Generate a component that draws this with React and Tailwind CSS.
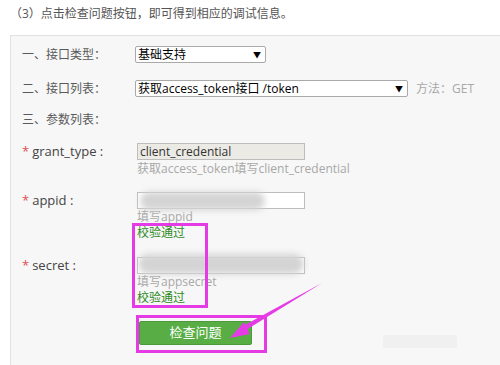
import React from "react";

const cjk = { fontFamily: '"Open Sans", "Noto Sans CJK SC", sans-serif' };

function Select({ w, children }) {
  return (
    <div
      className={`${w} h-[17px] bg-white border border-[#a9a9a9] rounded-[2px] flex items-center justify-between pl-[2px] pr-[4px] text-[12px] text-black`}
      style={cjk}
    >
      <span className="leading-none">{children}</span>
      <span className="text-[8px] leading-none">▼</span>
    </div>
  );
}

function Blur({ className }) {
  return <div className={`absolute bg-[#d4d4d4] blur-[3px] rounded-full ${className}`} />;
}

export default function App() {
  return (
    <div className="relative w-[500px] h-[365px] bg-white overflow-hidden" style={cjk}>
      <div className="pl-[10px] pt-[6px] h-[35px] text-[12px] text-[#555] leading-[16px]">
        （3）点击检查问题按钮，即可得到相应的调试信息。
      </div>
      <div className="ml-[10px] h-[340px] bg-[#f7f7f7] border-l border-t border-[#e2e2e2] pl-[11px] pt-[10px]">
        <div className="flex items-center h-[17px]">
          <div className="w-[113px] text-[12px] text-[#5a5a5a]">一、接口类型：</div>
          <Select w="w-[131px]">基础支持</Select>
        </div>
        <div className="flex items-center h-[17px] mt-[17px]">
          <div className="w-[113px] text-[12px] text-[#5a5a5a]">二、接口列表：</div>
          <Select w="w-[273px]">获取access_token接口 /token</Select>
          <div className="ml-[8px] text-[12px] text-[#a8a8a8]">方法：GET</div>
        </div>
        <div className="flex items-center h-[17px] mt-[14px]">
          <div className="w-[113px] text-[12px] text-[#5a5a5a]">三、参数列表：</div>
        </div>

        <div className="flex mt-[15px]">
          <div className="w-[113px] h-[17px] flex items-center text-[13px] text-[#444]">
            <span className="text-[#e05050] mr-[3px]">*</span>grant_type :
          </div>
          <div className="ml-[2px]">
            <div className="w-[168px] h-[17px] bg-[#ebeae5] border border-[#bdbdbd] flex items-center pl-[2px] text-[12px] text-[#333]">
              client_credential
            </div>
            <div className="text-[12px] text-[#a8a8a8] leading-[17px]">获取access_token填写client_credential</div>
          </div>
        </div>

        <div className="flex mt-[15px]">
          <div className="w-[113px] h-[17px] flex items-center text-[13px] text-[#444]">
            <span className="text-[#e05050] mr-[3px]">*</span>appid :
          </div>
          <div className="ml-[2px]">
            <div className="relative w-[168px] h-[17px] bg-white border border-[#bdbdbd] overflow-visible">
              <Blur className="left-[2px] top-[-1px] w-[125px] h-[18px]" />
            </div>
            <div className="text-[12px] text-[#a8a8a8] leading-[16px]">填写appid</div>
            <div className="text-[12px] text-[#2d8a23] leading-[15px]">校验通过</div>
          </div>
        </div>

        <div className="flex mt-[17px]">
          <div className="w-[113px] h-[17px] flex items-center text-[13px] text-[#444]">
            <span className="text-[#e05050] mr-[3px]">*</span>secret :
          </div>
          <div className="ml-[2px]">
            <div className="relative w-[168px] h-[17px] bg-white border border-[#bdbdbd]">
              <Blur className="left-[0px] top-[-4px] w-[166px] h-[20px]" />
            </div>
            <div className="text-[12px] text-[#a8a8a8] leading-[16px]">填写appsecret</div>
            <div className="text-[12px] text-[#2d8a23] leading-[15px]">校验通过</div>
            <button className="mt-[16px] ml-[2px] w-[113px] h-[24px] rounded-[2px] bg-[#58ae45] border border-[#4a9a3a] text-white text-[13px] flex items-center justify-center">
              检查问题
            </button>
          </div>
        </div>
      </div>

      <div className="absolute left-[383px] top-[335px] w-[74px] h-[13px] bg-[#f0f0f0]" />

      <div className="absolute left-[132px] top-[223px] w-[76px] h-[85px] border-[3px] border-[#e53be5]" />
      <div className="absolute left-[136px] top-[315px] w-[131px] h-[38px] border-[3px] border-[#e53be5]" />
      <svg className="absolute left-0 top-0" width="500" height="365" viewBox="0 0 500 365">
        <path d="M322 283 L246 330 L243 326 Z" fill="#e53be5" />
        <path d="M230 338 L244 322 L250 334 Z" fill="#e53be5" />
      </svg>
    </div>
  );
}
